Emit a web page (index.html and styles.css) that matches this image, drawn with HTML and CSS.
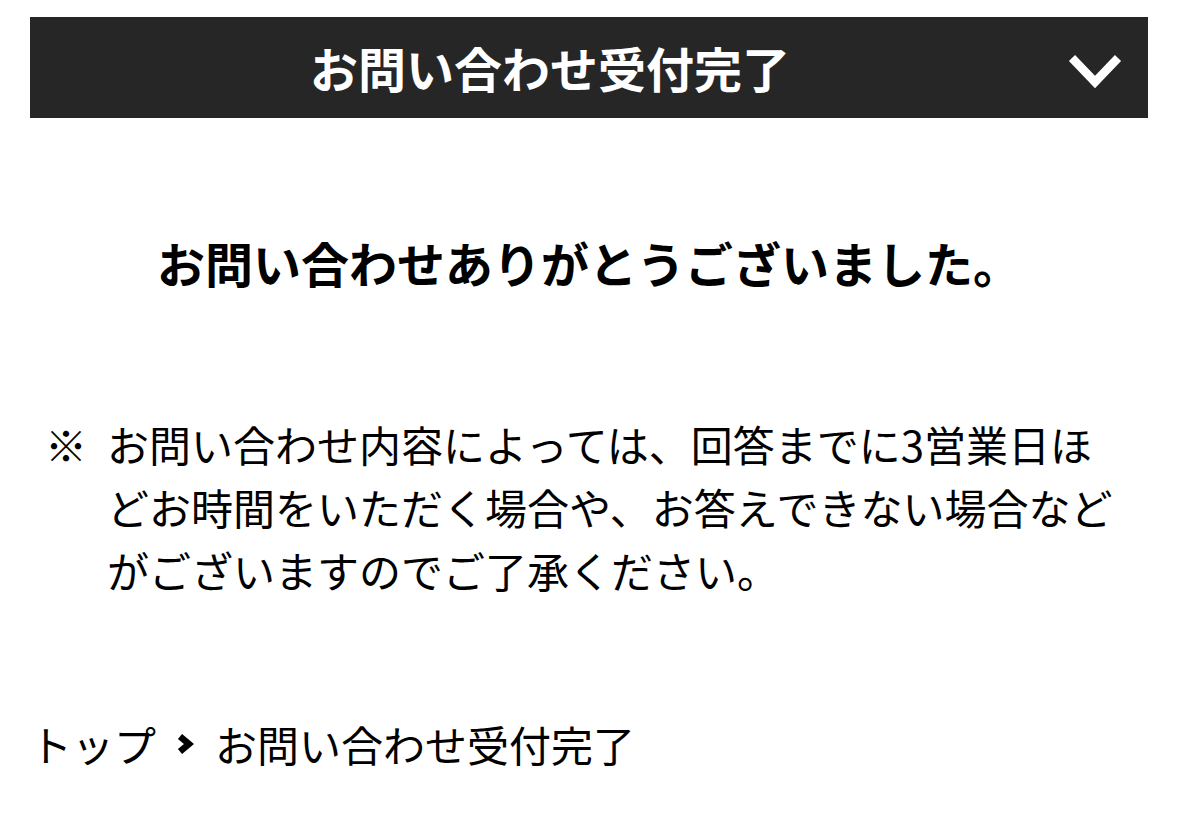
FILE: index.html
```html
<!DOCTYPE html>
<html lang="ja">
<head>
<meta charset="utf-8">
<title>お問い合わせ受付完了</title>
<link rel="stylesheet" href="styles.css">
</head>
<body>
<div class="page">
  <header class="bar">
    <span class="bar-spacer"></span>
    <h1 class="bar-title">お問い合わせ受付完了</h1>
    <span class="bar-toggle">
      <svg width="56" height="36" viewBox="0 0 56 36"><polyline points="5,5 28,29 51,5" fill="none" stroke="#fff" stroke-width="8.5" stroke-linejoin="miter" stroke-linecap="butt"/></svg>
    </span>
  </header>
  <h2 class="thanks">お問い合わせありがとうございました。</h2>
  <div class="note">
    <span class="note-mark">※</span>
    <p class="note-text">お問い合わせ内容によっては、回答までに3営業日ほどお時間をいただく場合や、お答えできない場合などがございますのでご了承ください。</p>
  </div>
  <nav class="crumbs">
    <span class="crumb">トップ</span>
    <span class="crumb-sep">
      <svg width="18" height="22" viewBox="0 0 18 22"><polyline points="4,3.5 13,11 4,18.5" fill="none" stroke="#000" stroke-width="6.5" stroke-linejoin="miter"/></svg>
    </span>
    <span class="crumb">お問い合わせ受付完了</span>
  </nav>
</div>
</body>
</html>
```

FILE: styles.css
```css
html, body {
  margin: 0;
  padding: 0;
  background: #fff;
}
body {
  font-family: "Noto Sans CJK JP", "Noto Sans", sans-serif;
  color: #000;
}
.page {
  padding: 17px 31px 0 30px;
}
.bar {
  height: 101px;
  background: #262626;
  display: grid;
  grid-template-columns: 280px auto 1fr;
  align-items: center;
}
.bar-title {
  margin: 0;
  color: #fff;
  font-size: 48px;
  font-weight: 700;
  line-height: 1;
  padding-bottom: 2px;
}
.bar-toggle {
  justify-self: end;
  margin-right: 25px;
  display: flex;
  margin-top: 6px;
}
.thanks {
  margin: 108px 0 0;
  text-align: center;
  font-size: 48px;
  font-weight: 700;
  line-height: 72px;
}
.note {
  margin-top: 114px;
  display: grid;
  grid-template-columns: 62px 1fr;
  padding-left: 15px;
  padding-right: 20px;
  font-size: 42px;
  line-height: 63px;
}
.note-mark {
  display: block;
}
.note-text {
  margin: 0;
}
.crumbs {
  margin-top: 111px;
  display: flex;
  align-items: center;
  font-size: 42px;
  line-height: 63px;
  padding-left: 0;
}
.crumb-sep {
  display: flex;
  margin: 0 21px 0 20px;
}
```
